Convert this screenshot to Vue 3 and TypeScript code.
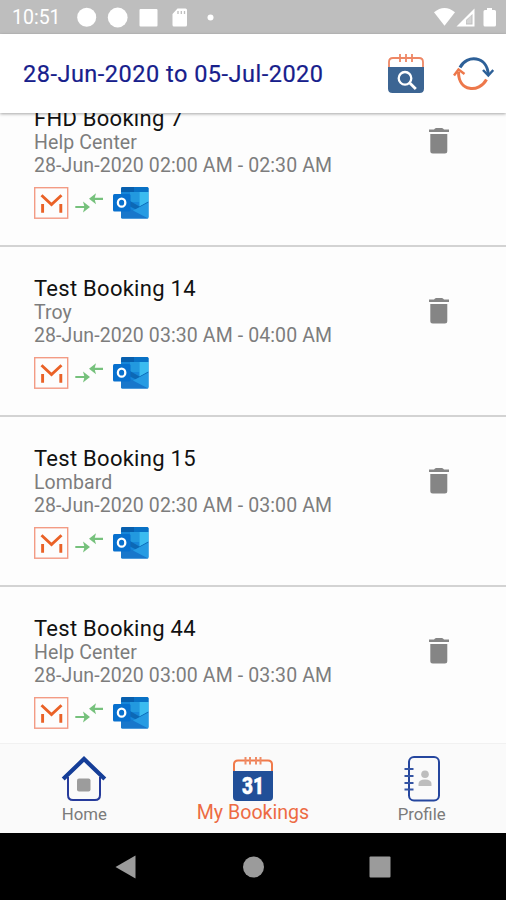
<script setup lang="ts">
interface Booking {
  title: string
  place: string
  time: string
}

const bookings: Booking[] = [
  { title: 'FHD Booking 7', place: 'Help Center', time: '28-Jun-2020 02:00 AM - 02:30 AM' },
  { title: 'Test Booking 14', place: 'Troy', time: '28-Jun-2020 03:30 AM - 04:00 AM' },
  { title: 'Test Booking 15', place: 'Lombard', time: '28-Jun-2020 02:30 AM - 03:00 AM' },
  { title: 'Test Booking 44', place: 'Help Center', time: '28-Jun-2020 03:00 AM - 03:30 AM' },
]
</script>

<template>
  <div class="screen">
    <div class="status">
      <span class="clock">10:51</span>
      <svg class="status-left" width="150" height="34" viewBox="0 0 150 34" fill="#fff">
        <circle cx="16.7" cy="17.3" r="9.5" />
        <circle cx="47.7" cy="17.5" r="9.9" />
        <rect x="69.5" y="9" width="18" height="17.5" rx="1" />
        <path d="M107.5 8.500h8a1.500 1.500 0 0 1 1.500 1.500v15a1.500 1.500 0 0 1-1.500 1.500h-11.500a1.500 1.500 0 0 1-1.500-1.500v-11z" />
        <path d="M108 11v3M111.300 11v3M114.500 11v3" stroke="#bebebe" stroke-width="1.300" />
        <circle cx="140.500" cy="17.500" r="3" />
      </svg>
      <svg class="status-right" width="66" height="34" viewBox="0 0 66 34" fill="#fff">
        <path d="M4 12.300Q14.500 3.500 25 12.300L14.500 25.800z" />
        <path fill-rule="evenodd" d="M44.500 8.500V26.500H26.500zM42.500 14v10.500h-6.500v-4.500z" />
        <path d="M36.500 20.500 41.500 15v8.500h-5z" opacity=".35" />
        <path d="M57 8h5v2h2.500q1.500 0 1.500 1.500v13.500q0 1.500-1.500 1.500h-9.500q-1.500 0-1.500-1.500v-13.500q0-1.500 1.500-1.500h2z" />
      </svg>
    </div>

    <header class="header">
      <h1 class="range">28-Jun-2020 to 05-Jul-2020</h1>
      <svg class="search-icon" width="38" height="42" viewBox="0 0 38 42" fill="none">
        <path d="M2 16V9q0-4 4-4h26q4 0 4 4v7" stroke="#ee8765" stroke-width="1.800" />
        <path d="M13 1v8M19 1v8M25 1v8" stroke="#ee8765" stroke-width="1.800" />
        <path d="M1 14h36v21.500q0 4.500-4.500 4.500h-27Q1 40 1 35.500z" fill="#3c6593" />
        <circle cx="18" cy="25.300" r="6.300" stroke="#fff" stroke-width="2.300" />
        <path d="m22.800 30 6 6" stroke="#fff" stroke-width="2.800" />
      </svg>
      <svg class="sync-icon" width="42" height="38" viewBox="0 0 42 38" fill="none">
        <path d="M8 12.500C14.500-.5 35.500.5 36.300 20" stroke="#2d6098" stroke-width="3" />
        <path d="m31 15 5.300 5.500 5-5.500" stroke="#2d6098" stroke-width="2.500" />
        <path d="M34.500 24.500C27 38 6.500 37 6.500 17" stroke="#ed784b" stroke-width="3" />
        <path d="m2 20.500 4.500-6 6 4.500" stroke="#ed784b" stroke-width="2.500" />
      </svg>
    </header>

    <main class="viewport">
      <div class="list">
        <article v-for="b in bookings" :key="b.title" class="row">
          <div class="info">
            <div class="title">{{ b.title }}</div>
            <div class="sub">{{ b.place }}</div>
            <div class="sub">{{ b.time }}</div>
            <svg class="link" width="116" height="32" viewBox="0 0 116 32" fill="none">
              <rect x=".7" y=".7" width="33" height="30.500" stroke="#f39b84" stroke-width="1.400" />
              <path d="m7.500 8.300 10 9.200 10-9.200M8.600 17v8.700M26.800 17v8.700" stroke="#ea6227" stroke-width="2.900" />
              <path d="M69 11.800H59M41.300 20h10" stroke="#76c17c" stroke-width="2.200" />
              <path d="M55 11.800l7-5.500-1.500 5.500 1.500 5.500zM56 20l-7-5.500 1.500 5.500-1.500 5.500z" fill="#76c17c" />
              <rect x="87" y="0" width="27.500" height="31.500" rx="1.500" fill="#1686d9" />
              <path d="M88.500 0h13v5h-14.500v-3.500q0-1.500 1.500-1.500" fill="#075fae" />
              <path d="M100 0h13q1.500 0 1.500 1.500V5H100z" fill="#0871c5" />
              <path d="M96 5h9.500v10H96z" fill="#2299df" />
              <path d="M105.500 5h9v9.500l-9 5z" fill="#3bbcf0" />
              <path d="M87 14h9l9.500 5.500 9-5v1L102 22.500 87 15z" fill="#0d68b5" />
              <path d="m87 17 27.500 14.500H88.500Q87 31.500 87 30z" fill="#1977cb" />
              <path d="M114.500 15.500v14.500q0 1-1 1L99 23.500z" fill="#269be3" />
              <rect x="79" y="7" width="17.500" height="17.500" rx="1.500" fill="#0870ce" />
              <ellipse cx="87.600" cy="15.700" rx="3.700" ry="4" stroke="#fff" stroke-width="2.300" />
            </svg>
          </div>
          <svg class="trash" width="20" height="26" viewBox="0 0 20 26" fill="#858585">
            <path d="M0 1.500h5Q6 0 7 0h6q1 0 2 1.500h5V4H0zM1.300 6h17v17q0 2.500-2.500 2.500h-12q-2.500 0-2.500-2.500z" />
          </svg>
        </article>
      </div>
    </main>

    <nav class="tabs">
      <div class="tab">
        <svg width="46" height="48" viewBox="0 0 46 48" fill="none">
          <path d="M7 22v18q0 5 5 5h22q5 0 5-5V22" stroke="#263b9b" stroke-width="2" />
          <path d="m2.200 24 20.800-20 20.800 20" stroke="#153e98" stroke-width="4.200" />
          <rect x="16" y="23.500" width="13.500" height="13" rx="2" fill="#9c9c9c" />
        </svg>
        <span>Home</span>
      </div>
      <div class="tab active">
        <svg width="42" height="48" viewBox="0 0 42 48" fill="none">
          <path d="M2 17V9.500q0-4 4-4h30q4 0 4 4V17" stroke="#f07a4b" stroke-width="2" />
          <path d="M13.500 2v7.500M18 2v7.500M24 2v7.500M28.500 2v7.500" stroke="#ef8c67" stroke-width="2" />
          <path d="M1 16h40v26q0 4-4 4H5q-4 0-4-4z" fill="#214f98" />
          <text x="21" y="39" text-anchor="middle" textLength="22" lengthAdjust="spacingAndGlyphs" class="day">31</text>
        </svg>
        <span>My Bookings</span>
      </div>
      <div class="tab">
        <svg width="36" height="48" viewBox="0 0 36 48" fill="none">
          <rect x="5" y="2" width="30" height="43.500" rx="5" stroke="#25469e" stroke-width="2" />
          <path d="M.5 14h9M.5 21h9M.5 28h9M.5 34.500h9" stroke="#3555a3" stroke-width="2" />
          <circle cx="21" cy="19.300" r="3.800" fill="#bdbdbd" />
          <path d="M14.500 31v-2q0-4.500 6.500-4.500t6.500 4.500v2z" fill="#bdbdbd" />
        </svg>
        <span>Profile</span>
      </div>
    </nav>

    <div class="system">
      <svg width="21" height="24" viewBox="0 0 21 24"><path d="M20.500 .5v23L.5 12z" fill="#9b9b9b" /></svg>
      <svg width="22" height="22" viewBox="0 0 22 22"><circle cx="11.500" cy="11" r="10.500" fill="#9b9b9b" /></svg>
      <svg width="22" height="22" viewBox="0 0 22 22"><rect x=".5" y=".5" width="21" height="21" rx="1" fill="#9b9b9b" /></svg>
    </div>
  </div>
</template>

<style>
body {
  margin: 0;
}
</style>

<style scoped>
.screen {
  width: 506px;
  height: 900px;
  display: flex;
  flex-direction: column;
  overflow: hidden;
  background: #fdfdfd;
  font-family: Roboto, "Liberation Sans", sans-serif;
}
svg {
  display: block;
  flex: none;
}
.status {
  flex: 0 0 34px;
  box-sizing: border-box;
  display: flex;
  align-items: center;
  padding: 0 10px 0 12px;
  background: #bebebe;
  color: #fff;
}
.clock {
  width: 58px;
  font-size: 19.5px;
  line-height: 30px;
  padding-top: 2px;
}
.status-right {
  margin-left: auto;
}
.header {
  flex: 0 0 79px;
  box-sizing: border-box;
  display: flex;
  align-items: center;
  padding: 0 12px 0 23px;
  background: #fff;
  box-shadow: 0 1px 3px rgba(0, 0, 0, 0.35);
  z-index: 1;
}
.range {
  margin: 0;
  flex: 1;
  font-size: 23.5px;
  font-weight: 400;
  letter-spacing: 0.5px;
  -webkit-text-stroke: 0.2px #17208c;
  line-height: 30px;
  color: #17208c;
  white-space: nowrap;
}
.search-icon {
  margin-right: 27px;
}
.viewport {
  flex: 1;
  min-height: 0;
  overflow: hidden;
}
.list {
  margin-top: -36px;
}
.row {
  height: 170px;
  box-sizing: border-box;
  display: flex;
  justify-content: space-between;
  padding: 28px 57px 0 34px;
  border-bottom: 2px solid #d3d3d3;
}
.title {
  font-size: 22px;
  line-height: 27px;
  letter-spacing: 0.27px;
  color: #111;
  white-space: nowrap;
}
.sub {
  font-size: 19.5px;
  line-height: 22.5px;
  letter-spacing: 0.1px;
  color: #7d7d7d;
  white-space: nowrap;
}
.link {
  margin-top: 10px;
}
.trash {
  margin-top: 23px;
}
.tabs {
  flex: 0 0 90px;
  box-sizing: border-box;
  display: grid;
  grid-template-columns: repeat(3, 1fr);
  padding-top: 11px;
  border-top: 1px solid #f1f1f1;
  background: #fafafa;
}
.tab {
  display: flex;
  flex-direction: column;
  align-items: center;
  font-size: 16.8px;
  line-height: 22px;
  color: #7b7b7b;
}
.active {
  font-size: 19.6px;
  line-height: 20px;
  color: #ed6b43;
}
.day {
  font-family: Roboto, sans-serif;
  font-size: 24px;
  font-weight: 900;
  fill: #fff;
  stroke: #fff;
  stroke-width: 0.5px;
}
.system {
  flex: 0 0 67px;
  display: flex;
  align-items: center;
  justify-content: space-between;
  box-sizing: border-box;
  padding: 0 115px;
  background: #000;
}
</style>
